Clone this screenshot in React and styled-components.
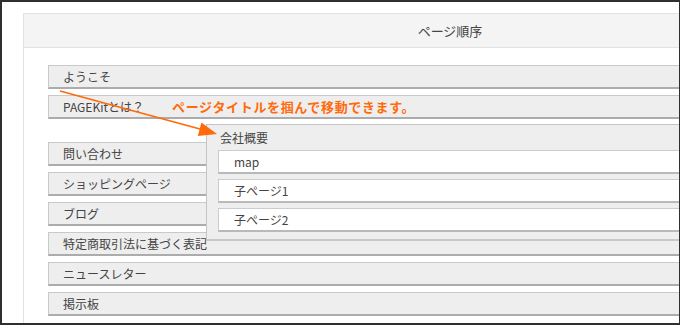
import React from "react";
import styled, { createGlobalStyle } from "styled-components";

const GlobalStyle = createGlobalStyle`
  html, body {
    margin: 0;
    padding: 0;
    background: #fff;
  }
  body {
    font-family: "Noto Sans CJK JP", "Noto Sans", sans-serif;
    color: #444;
  }
`;

const pages = [
  { id: "welcome", title: "ようこそ" },
  { id: "about", title: "PAGEKitとは？" },
  { id: "placeholder", placeholder: true },
  { id: "contact", title: "問い合わせ" },
  { id: "shop", title: "ショッピングページ" },
  { id: "blog", title: "ブログ" },
  { id: "law", title: "特定商取引法に基づく表記" },
  { id: "news", title: "ニュースレター" },
  { id: "board", title: "掲示板" },
];

const dragged = {
  title: "会社概要",
  children: ["map", "子ページ1", "子ページ2"],
};

const App = () => {
  return (
    <>
      <GlobalStyle />
      <Frame>
        <Panel>
          <PanelHeader>ページ順序</PanelHeader>
          <PanelBody>
            <SortList>
              {pages.map((page) =>
                page.placeholder ? (
                  <Placeholder key={page.id} />
                ) : (
                  <SortRow key={page.id}>{page.title}</SortRow>
                )
              )}
            </SortList>
          </PanelBody>
        </Panel>

        {/* item being dragged */}
        <DragGhost>
          <GhostTitle>{dragged.title}</GhostTitle>
          <ChildList>
            {dragged.children.map((c) => (
              <ChildRow key={c}>{c}</ChildRow>
            ))}
          </ChildList>
        </DragGhost>

        <Note>ページタイトルを掴んで移動できます。</Note>
        <Arrow width="680" height="325" viewBox="0 0 680 325">
          <line
            x1="60"
            y1="91"
            x2="200"
            y2="129"
            stroke="#ff6a0a"
            strokeWidth="1.8"
          />
          <polygon points="217,134 197.8,136.1 201.4,122.5" fill="#ff6a0a" />
        </Arrow>
      </Frame>
    </>
  );
};

const Frame = styled.div`
  position: relative;
  box-sizing: border-box;
  width: 680px;
  height: 325px;
  border: 2px solid #2f2f2f;
  border-right-width: 1px;
  padding: 11px 0 0 21px;
  overflow: hidden;
`;

const Panel = styled.div`
  width: 852px;
  height: 400px;
  border: 1px solid #e2e2e2;
  background: #fff;
`;

const PanelHeader = styled.div`
  height: 33px;
  display: flex;
  align-items: center;
  justify-content: center;
  background: #f4f4f4;
  border-bottom: 1px solid #e2e2e2;
  font-size: 13px;
  color: #444;
`;

const PanelBody = styled.div`
  padding: 17px 0 0 24px;
`;

const SortList = styled.div`
  display: flex;
  flex-direction: column;
  gap: 6px;
`;

const SortRow = styled.div`
  box-sizing: border-box;
  height: 24px;
  display: flex;
  align-items: center;
  padding-left: 14px;
  background: #eeeeee;
  border: 1px solid #c9c9c9;
  border-bottom: 2px solid #acacac;
  font-size: 12px;
  color: #444;
`;

const Placeholder = styled.div`
  height: 11px;
`;

const DragGhost = styled.div`
  position: absolute;
  left: 204px;
  top: 122px;
  width: 640px;
  box-sizing: border-box;
  background: #eeeeee;
  border: 1px solid #c4c4c4;
  border-bottom: 2px solid #c8c8c8;
  padding: 0 0 7px 11px;
`;

const GhostTitle = styled.div`
  height: 25px;
  display: flex;
  align-items: center;
  padding-left: 2px;
  font-size: 12px;
  color: #444;
`;

const ChildList = styled.div`
  display: flex;
  flex-direction: column;
  gap: 5px;
`;

const ChildRow = styled.div`
  box-sizing: border-box;
  height: 24px;
  display: flex;
  align-items: center;
  padding-left: 15px;
  background: #fff;
  border: 1px solid #cccccc;
  border-bottom: 2px solid #b9b9b9;
  font-size: 12px;
  color: #444;
`;

const Note = styled.div`
  position: absolute;
  left: 170px;
  top: 96px;
  font-size: 13px;
  line-height: 17px;
  font-weight: 700;
  letter-spacing: 0.65px;
  color: #ff6a0a;
  white-space: nowrap;
`;

const Arrow = styled.svg`
  position: absolute;
  left: -2px;
  top: -2px;
  pointer-events: none;
`;

export default App;
